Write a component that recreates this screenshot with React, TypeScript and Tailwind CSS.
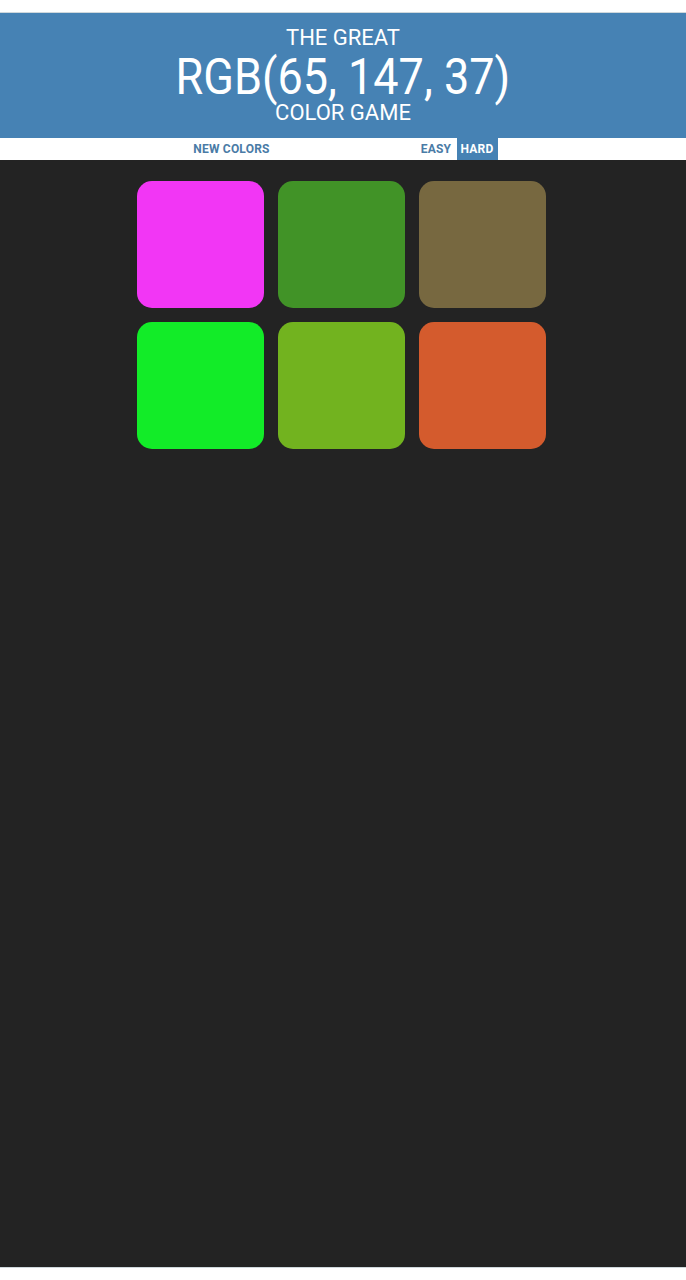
import { useState } from 'react';

const squares = [
  '#f236f5',
  '#419327',
  '#776840',
  '#12ec28',
  '#72b31f',
  '#d45b2d',
];

export default function App() {
  const [mode, setMode] = useState<'easy' | 'hard'>('hard');

  return (
    <div className="flex min-h-[1280px] flex-col bg-white font-['Roboto',sans-serif]">
      <div className="h-[13px] border-b border-[#cfd8dc]" />

      {/* Header */}
      <header className="flex h-[125px] flex-col items-center bg-[#4682b4] pt-[11px] text-white">
        <span className="text-[22px] leading-[28px]">THE GREAT</span>
        <span className="mt-[2px] scale-x-90 text-[50px] leading-[46px]">RGB(65, 147, 37)</span>
        <span className="text-[22px] leading-[26px]">COLOR GAME</span>
      </header>

      {/* Stripe */}
      <nav className="flex h-[22px] justify-center bg-white pr-[1px] text-[12px] font-bold tracking-[0.2px] text-[#4a7ba6]">
        <button className="w-[88px]">NEW COLORS</button>
        <span className="w-[140px]" />
        <button
          onClick={() => setMode('easy')}
          className={mode === 'easy' ? 'w-[41px] bg-[#4682b4] text-white' : 'w-[41px]'}
        >
          EASY
        </button>
        <button
          onClick={() => setMode('hard')}
          className={mode === 'hard' ? 'w-[41px] bg-[#4682b4] text-white' : 'w-[41px]'}
        >
          HARD
        </button>
      </nav>

      {/* Board */}
      <main className="flex flex-1 justify-center border-b border-[#cfd8dc] bg-[#232323] pr-[3px] pt-[21px]">
        <div className="grid h-fit grid-cols-[repeat(3,127px)] gap-[14px]">
          {squares.map((color) => (
            <div
              key={color}
              className="h-[127px] rounded-[15px]"
              style={{ backgroundColor: color }}
            />
          ))}
        </div>
      </main>

      <div className="h-3" />
    </div>
  );
}
